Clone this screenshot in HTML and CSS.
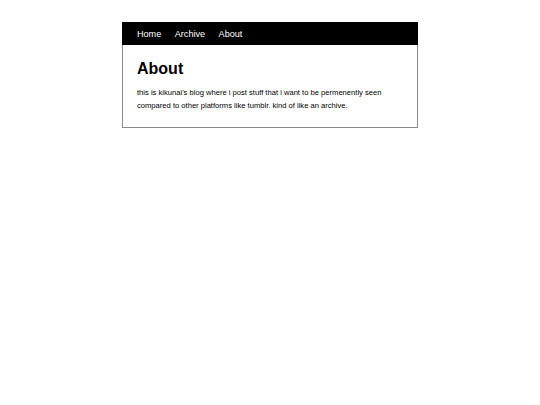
FILE: index.html
```html
<!DOCTYPE html>
<html>
<head>
<meta charset="utf-8">
<link rel="stylesheet" href="styles.css">
</head>
<body>
<div class="page">
  <nav class="nav">
    <a href="#">Home</a>
    <a href="#">Archive</a>
    <a href="#">About</a>
  </nav>
  <main class="content">
    <h1 class="title">About</h1>
    <p class="text">this is kikunai's blog where i post stuff that i want to be permenently seen compared to other platforms like tumblr. kind of like an archive.</p>
  </main>
</div>
</body>
</html>
```
FILE: styles.css
```css
html, body {
  margin: 0;
  padding: 0;
  background: #fff;
}
body {
  font-family: "Liberation Sans", Arial, sans-serif;
  color: #000;
}
.page {
  width: 294px;
  margin: 22px 0 0 122px;
  border: 1px solid #8a8a8a;
  border-top: none;
}
.nav {
  background: #000;
  height: 23px;
  margin: 0 -1px;
  display: flex;
  align-items: center;
  gap: 13.5px;
  padding: 0 15px;
}
.nav a {
  color: #fff;
  text-decoration: none;
  font-size: 9.1px;
}
.content {
  padding: 14px 14px 15px;
}
.title {
  margin: 0 0 9px;
  font-size: 16px;
  line-height: 19px;
  font-weight: bold;
}
.text {
  margin: 0;
  font-size: 7.6px;
  line-height: 12.5px;
}
```
